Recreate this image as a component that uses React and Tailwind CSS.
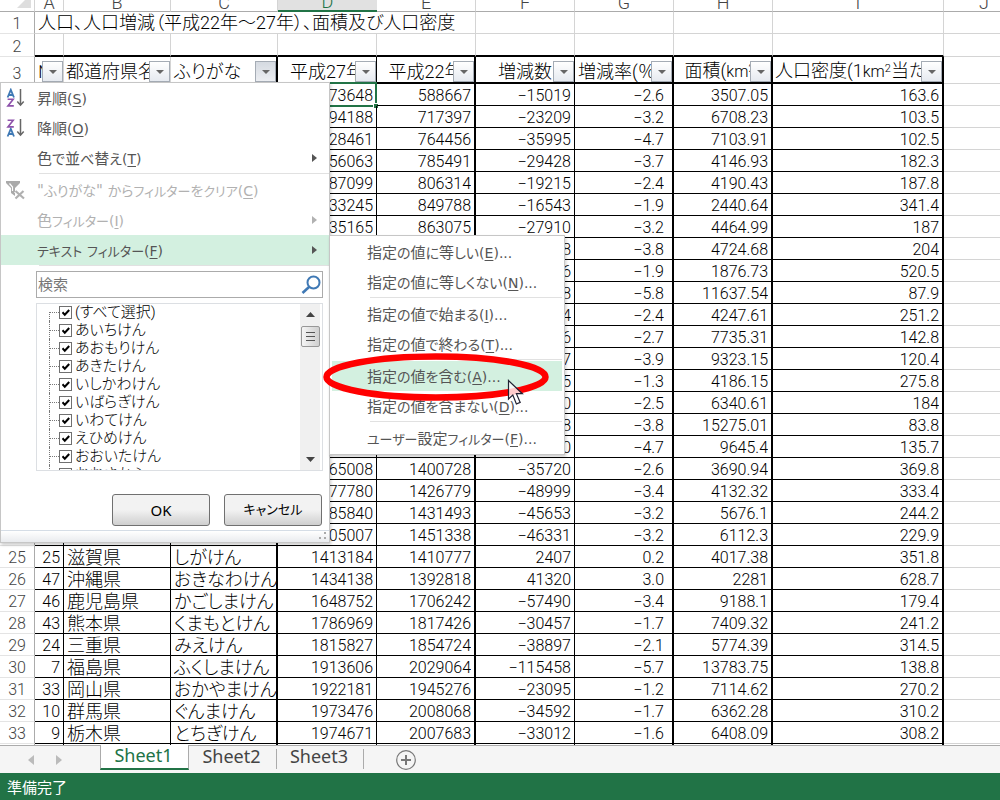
import React from "react";

const ROWS = [
  { n: 4, d: "573648", e: "588667", f: "−15019", g: "−2.6", h: "3507.05", i: "163.6" },
  { n: 5, d: "694188", e: "717397", f: "−23209", g: "−3.2", h: "6708.23", i: "103.5" },
  { n: 6, d: "728461", e: "764456", f: "−35995", g: "−4.7", h: "7103.91", i: "102.5" },
  { n: 7, d: "756063", e: "785491", f: "−29428", g: "−3.7", h: "4146.93", i: "182.3" },
  { n: 8, d: "787099", e: "806314", f: "−19215", g: "−2.4", h: "4190.43", i: "187.8" },
  { n: 9, d: "833245", e: "849788", f: "−16543", g: "−1.9", h: "2440.64", i: "341.4" },
  { n: 10, d: "835165", e: "863075", f: "−27910", g: "−3.2", h: "4464.99", i: "187" },
  { n: 11, f: "8", g: "−3.8", h: "4724.68", i: "204" },
  { n: 12, f: "6", g: "−1.9", h: "1876.73", i: "520.5" },
  { n: 13, f: "8", g: "−5.8", h: "11637.54", i: "87.9" },
  { n: 14, f: "4", g: "−2.4", h: "4247.61", i: "251.2" },
  { n: 15, f: "6", g: "−2.7", h: "7735.31", i: "142.8" },
  { n: 16, f: "7", g: "−3.9", h: "9323.15", i: "120.4" },
  { n: 17, f: "5", g: "−1.3", h: "4186.15", i: "275.8" },
  { n: 18, f: "0", g: "−2.5", h: "6340.61", i: "184" },
  { n: 19, f: "8", g: "−3.8", h: "15275.01", i: "83.8" },
  { n: 20, f: "0", g: "−4.7", h: "9645.4", i: "135.7" },
  { n: 21, d: "1365008", e: "1400728", f: "−35720", g: "−2.6", h: "3690.94", i: "369.8" },
  { n: 22, d: "1377780", e: "1426779", f: "−48999", g: "−3.4", h: "4132.32", i: "333.4" },
  { n: 23, d: "1385840", e: "1431493", f: "−45653", g: "−3.2", h: "5676.1", i: "244.2" },
  { n: 24, d: "1405007", e: "1451338", f: "−46331", g: "−3.2", h: "6112.3", i: "229.9" },
  { n: 25, a: "25", b: "滋賀県", c: "しがけん", d: "1413184", e: "1410777", f: "2407", g: "0.2", h: "4017.38", i: "351.8" },
  { n: 26, a: "47", b: "沖縄県", c: "おきなわけん", d: "1434138", e: "1392818", f: "41320", g: "3.0", h: "2281", i: "628.7" },
  { n: 27, a: "46", b: "鹿児島県", c: "かごしまけん", d: "1648752", e: "1706242", f: "−57490", g: "−3.4", h: "9188.1", i: "179.4" },
  { n: 28, a: "43", b: "熊本県", c: "くまもとけん", d: "1786969", e: "1817426", f: "−30457", g: "−1.7", h: "7409.32", i: "241.2" },
  { n: 29, a: "24", b: "三重県", c: "みえけん", d: "1815827", e: "1854724", f: "−38897", g: "−2.1", h: "5774.39", i: "314.5" },
  { n: 30, a: "7", b: "福島県", c: "ふくしまけん", d: "1913606", e: "2029064", f: "−115458", g: "−5.7", h: "13783.75", i: "138.8" },
  { n: 31, a: "33", b: "岡山県", c: "おかやまけん", d: "1922181", e: "1945276", f: "−23095", g: "−1.2", h: "7114.62", i: "270.2" },
  { n: 32, a: "10", b: "群馬県", c: "ぐんまけん", d: "1973476", e: "2008068", f: "−34592", g: "−1.7", h: "6362.28", i: "310.2" },
  { n: 33, a: "9", b: "栃木県", c: "とちぎけん", d: "1974671", e: "2007683", f: "−33012", g: "−1.6", h: "6408.09", i: "308.2" },
  { n: "" },
];

const COLUMNS = [
  { key: "a", edge: "border-r", align: "text-right pr-[3px]" },
  { key: "b", edge: "border-r", align: "text-left pl-[3px]" },
  { key: "c", edge: "border-r-2", align: "text-left pl-[3px]" },
  { key: "d", edge: "border-r", align: "text-right pr-[3px]" },
  { key: "e", edge: "border-r-2", align: "text-right pr-[3px]" },
  { key: "f", edge: "border-r", align: "text-right pr-[3px]" },
  { key: "g", edge: "border-r-2", align: "text-right pr-2" },
  { key: "h", edge: "border-r-2", align: "text-right pr-[3px]" },
  { key: "i", edge: "border-r-2", align: "text-right pr-[3px]" },
];

const FILTERS = [
  { label: "№", edge: "border-r border-r-[#d4d4d4]", place: "justify-start pl-[3px]" },
  { label: "都道府県名", edge: "border-r border-r-[#d4d4d4]", place: "justify-start pl-[2px]" },
  { label: "ふりがな", edge: "border-r-2 border-black", place: "justify-start pl-[3px]", active: true },
  { label: "平成27年", edge: "border-r border-black", place: "justify-center" },
  { label: "平成22年", edge: "border-r-2 border-black", place: "justify-center" },
  { label: "増減数", edge: "border-r border-black", place: "justify-center" },
  { label: "増減率(％)", edge: "border-r-2 border-black", place: "justify-start pl-[3px]" },
  { label: <>面積(<Unit />)</>, name: "面積", edge: "border-r-2 border-black", place: "justify-center" },
  { label: <>人口密度(1<Unit />当たり)</>, name: "人口密度", edge: "border-r-2 border-black", place: "justify-start pl-[2px]" },
];

const LETTERS = ["A", "B", "C", "D", "E", "F", "G", "H", "I", "J"];

const CHOICES = [
  "(すべて選択)", "あいちけん", "あおもりけん", "あきたけん", "いしかわけん",
  "いばらぎけん", "いわてけん", "えひめけん", "おおいたけん", "おおさかふ",
];

const SHEET_FONT = "font-['Roboto','Noto_Sans_CJK_JP',sans-serif] font-light";
const MENU_FONT = "font-['DejaVu_Sans','Noto_Sans_CJK_JP',sans-serif] [font-feature-settings:'palt']";

function Unit() {
  return <span className="text-base">km<sup className="text-[11px]">2</sup></span>;
}

function FilterButton({ name, active }) {
  return (
    <button
      type="button"
      aria-label={name + "のフィルター"}
      className={
        "absolute right-0 bottom-0 flex h-[21px] w-[21px] items-center justify-center border border-[#a5acb5] " +
        (active ? "bg-linear-to-b from-[#d5dae1] to-[#eceef2]" : "bg-linear-to-b from-white to-[#e6eaf0]")
      }
    >
      <svg width="8" height="4" viewBox="0 0 8 4" aria-hidden="true"><path d="M0 0h8L4 4z" fill="#666" /></svg>
    </button>
  );
}

function Sheet() {
  return (
    <table className={"-mt-[10px] w-full table-fixed border-separate border-spacing-0 leading-[18px] text-black " + SHEET_FONT}>
      <colgroup>
        <col className="w-[35px]" />
        <col className="w-[29px]" />
        <col className="w-[107px]" />
        <col className="w-[107px]" />
        <col className="w-[99px]" />
        <col className="w-[99px]" />
        <col className="w-[99px]" />
        <col className="w-[99px]" />
        <col className="w-[99px]" />
        <col className="w-[171px]" />
        <col />
      </colgroup>
      <thead>
        <tr className="h-[22px] text-lg leading-[16px] text-[#444]">
          <td className="border-r border-b border-r-[#d4d4d4] border-b-[#ababab] p-0 align-bottom">
            <svg className="mb-[3px] ml-[17px] block" width="14" height="14" viewBox="0 0 14 14" aria-hidden="true"><path d="M14 0v14H0z" fill="#dedede" /></svg>
          </td>
          {LETTERS.map((l) => (
            <th
              key={l}
              scope="col"
              className={
                "p-0 text-center align-bottom font-light " +
                (l === "D"
                  ? "border-b-2 border-[#217346] bg-[#e1e1e1] text-[#217346]"
                  : "border-b border-r-[#d4d4d4] border-b-[#ababab]") +
                (l === "J" ? " pl-6" : l === "D" ? "" : " border-r")
              }
            >
              {l}
            </th>
          ))}
        </tr>
      </thead>
      <tbody>
        <tr className="h-[22px]">
          <RowHead n={1} />
          <td colSpan={5} className="border-r border-b border-[#d4d4d4] p-0 pl-[3px] text-lg leading-[20px] whitespace-nowrap [font-feature-settings:'palt']">
            人口、人口増減（平成22年～27年）、面積及び人口密度
          </td>
          {LETTERS.slice(5).map((l) => <td key={l} className={"border-b border-[#d4d4d4] p-0 " + (l === "J" ? "" : "border-r")} />)}
        </tr>
        <tr className="h-[23px]">
          <RowHead n={2} />
          {LETTERS.map((l) => (
            <td key={l} className={"p-0 " + (l === "J" ? "border-b border-b-[#d4d4d4]" : "border-r border-b-2 border-r-[#d4d4d4] border-b-black")} />
          ))}
        </tr>
        <tr className="h-[27px]">
          <RowHead n={3} />
          {FILTERS.map((f, k) => (
            <th key={k} scope="col" className={"border-b-2 border-b-black p-0 font-light " + f.edge}>
              <div className={"relative flex h-[25px] items-center overflow-hidden pt-[5px] text-lg leading-[20px] whitespace-nowrap [font-feature-settings:'palt'] " + f.place}>
                <span>{f.label}</span>
                <FilterButton name={f.name || f.label} active={f.active} />
              </div>
            </th>
          ))}
          <td className="border-b border-[#d4d4d4] p-0" />
        </tr>
        {ROWS.map((r) => (
          <tr key={r.n} className="h-[22px]">
            <RowHead n={r.n} />
            {COLUMNS.map((c) => (
              <td key={c.key} className={"relative border-b border-black p-0 " + c.edge + " " + c.align}>
                <span className={"block h-[21px] overflow-hidden leading-[24px] whitespace-nowrap " + (c.key === "b" || c.key === "c" ? "text-lg leading-[24px] [font-feature-settings:'palt']" : "text-base leading-[24px]")}>
                  {r[c.key]}
                </span>
                {r.n === 4 && c.key === "d" && (
                  <span className="absolute -inset-x-[1px] -top-[2px] -bottom-[2px] border-2 border-[#217346]">
                    <span className="absolute -right-[3px] -bottom-[3px] h-[5px] w-[5px] border-t border-l border-white bg-[#217346]" />
                  </span>
                )}
              </td>
            ))}
            <td className="border-b border-[#d4d4d4] p-0" />
          </tr>
        ))}
      </tbody>
    </table>
  );
}

function RowHead({ n }) {
  return (
    <th scope="row" className="border-r border-b border-r-[#ababab] border-b-[#e4e4e4] p-0 text-center align-bottom text-base leading-[18px] font-light text-[#444]">
      {n}
    </th>
  );
}

function Label({ text }) {
  return text.split(/([ァ-ヶー]+|[ぁ-ん]+)/).map((part, k) => {
    if (/^[ァ-ヶー]/.test(part)) return <span key={k} className="text-[13px]">{part}</span>;
    if (/^[ぁ-ん]/.test(part)) return <span key={k} className="text-sm">{part}</span>;
    return part;
  });
}

function MenuItem({ text, hotkey, suffix, icon, arrow, disabled, highlighted, aside }) {
  return (
    <button
      type="button"
      disabled={disabled}
      className={
        "flex h-[30px] w-full items-center pr-3 text-left text-[15px] leading-[20px] whitespace-nowrap " +
        (disabled ? "text-[#b1b1b1] " : "text-[#555] ") +
        (highlighted ? "bg-[#d3f0e0]" : "")
      }
    >
      <span className={"flex shrink-0 items-center pl-1 " + (aside || "w-9")}>{icon}</span>
      <span className="grow pt-[2px]">
        <Label text={text} />
        <span className="text-sm">(<span className="underline underline-offset-2">{hotkey}</span>){suffix}</span>
      </span>
      {arrow && <svg width="5" height="8" viewBox="0 0 5 8" aria-hidden="true"><path d="M0 0l5 4-5 4z" fill="currentColor" /></svg>}
    </button>
  );
}

function Rule() {
  return <div className="ml-[38px] h-[2px] border-t border-[#e1e1e1]" />;
}

function SortIcon({ descending }) {
  const a = descending ? 9 : 0;
  const z = descending ? 0 : 9;
  return (
    <svg width="20" height="20" viewBox="0 0 20 20" fill="none" aria-hidden="true">
      <g transform={"translate(2 " + (a + 1) + ")"} stroke="#3f79b5" strokeWidth="1.8">
        <path d="M0.6 8.5L3.8 0.8 7 8.5M1.8 6H5.9" />
      </g>
      <g transform={"translate(2 " + (z + 1) + ")"} stroke="#8d52ab" strokeWidth="1.6">
        <path d="M0.6 1.2H6.2L0.9 7.9H6.8" />
      </g>
      <path d="M15.500 1v16M12.300 13.600l3.200 3.600 3.200-3.600" stroke="#666" strokeWidth="1.500" />
    </svg>
  );
}

function ClearIcon() {
  return (
    <svg width="22" height="20" viewBox="0 0 22 20" aria-hidden="true">
      <path d="M1 1h14v2l-5 5v8l-4-3V8L1 3z" fill="#aaa" />
      <path d="M4.500 3.500l3 3.500v4" stroke="#fff" strokeWidth="1.200" fill="none" />
      <path d="M10.500 11l8 7.500M18.500 11l-8 7.500" stroke="#fff" strokeWidth="4" />
      <path d="M10.500 11l8.500 7.500M18.500 11l-8 7.500" stroke="#b0b0b0" strokeWidth="2.200" />
    </svg>
  );
}

function Choice({ label, first }) {
  return (
    <li className="flex h-[18px] items-center">
      <span className="flex w-[22px] shrink-0 self-stretch pl-3">
        <span className={"w-0 border-l border-dotted border-[#777] " + (first ? "mt-[9px]" : "")} />
        <span className="mt-[9px] h-0 grow border-t border-dotted border-[#777]" />
      </span>
      <label className="flex items-center text-[15px] leading-[16px] whitespace-nowrap text-black">
        <span className="relative mr-[3px] flex">
          <input type="checkbox" defaultChecked className="h-[13px] w-[13px] appearance-none border border-[#707070] bg-white" />
          <svg className="pointer-events-none absolute top-[3px] left-[3px]" width="8" height="8" viewBox="0 0 8 8" fill="none" aria-hidden="true">
            <path d="M0.5 3.200L2.800 5.800 7.200 1" stroke="#000" strokeWidth="2" />
          </svg>
        </span>
        {label}
      </label>
    </li>
  );
}

function FilterMenu() {
  return (
    <div className={"absolute top-[82px] left-0 flex h-[461px] w-[330px] flex-col border border-[#c6c6c6] bg-white shadow-[1px_2px_3px_rgba(0,0,0,0.2)] " + MENU_FONT}>
      <MenuItem hotkey="S" icon={<SortIcon />} text="昇順" />
      <MenuItem hotkey="O" icon={<SortIcon descending />} text="降順" />
      <MenuItem hotkey="T" arrow text="色で並べ替え" />
      <Rule />
      <MenuItem hotkey="C" disabled icon={<ClearIcon />} text={'"ふりがな" からフィルターをクリア'} />
      <MenuItem hotkey="I" arrow disabled text="色フィルター" />
      <MenuItem hotkey="F" arrow highlighted text="テキスト フィルター" />
      <Rule />
      <div className="mt-1 mr-[6px] ml-[35px] flex h-[27px] items-center border border-[#ababab] pr-px pl-px">
        <input type="text" aria-label="検索" placeholder="検索" className="min-w-0 grow text-[15px] leading-[20px] outline-none placeholder:text-[#777]" />
        <svg width="20" height="20" viewBox="0 0 20 20" fill="none" stroke="#3f79b5" aria-hidden="true">
          <circle cx="12.500" cy="7.500" r="6" strokeWidth="2" />
          <path d="M8 12L1.500 18" strokeWidth="2.600" />
        </svg>
      </div>
      <div className={"mt-[5px] mr-[6px] ml-[35px] flex h-[168px] overflow-hidden border border-[#dcdfe3] " + SHEET_FONT + " [font-feature-settings:'palt']"}>
        <ul className="-mt-px grow">
          {CHOICES.map((c, k) => <Choice key={c} label={c} first={k === 0} />)}
        </ul>
        <div className="mr-[2px] flex w-5 flex-col items-center bg-[#f0f0f0] pt-2 pb-2">
          <svg width="9" height="5" viewBox="0 0 9 5" aria-hidden="true"><path d="M0 5h9L4.500 0z" fill="#444" /></svg>
          <span className="mt-[9px] flex h-[21px] w-[19px] flex-col items-center justify-center gap-[3px] rounded-[2px] border border-[#979797] bg-linear-to-r from-[#f5f5f5] to-[#cfcfcf]">
            <span className="h-px w-[9px] bg-[#555]" />
            <span className="h-px w-[9px] bg-[#555]" />
            <span className="h-px w-[9px] bg-[#555]" />
          </span>
          <svg className="mt-auto" width="9" height="5" viewBox="0 0 9 5" aria-hidden="true"><path d="M0 0h9L4.500 5z" fill="#444" /></svg>
        </div>
      </div>
      <div className="mt-[23px] mr-[7px] flex justify-end gap-[14px] text-black">
        <button type="button" className="h-8 w-[98px] rounded-[3px] border border-[#707070] bg-linear-to-b from-[#f2f2f2] from-50% to-[#cfcfcf] to-100% font-['Noto_Sans',sans-serif] text-[15px] leading-[20px]">OK</button>
        <button type="button" className="h-8 w-[98px] rounded-[3px] border border-[#707070] bg-linear-to-b from-[#f2f2f2] from-50% to-[#cfcfcf] to-100% text-[13px] leading-[20px]">キャンセル</button>
      </div>
      <div className="mt-auto flex h-3 items-end justify-end border-t border-[#d5dde6] bg-linear-to-b from-white to-[#e9ebee] p-[2px]">
        <svg width="8" height="8" viewBox="0 0 8 8" fill="#aaa" aria-hidden="true"><path d="M5 0h2v2H5zM5 5h2v2H5zM0 5h2v2H0z" /></svg>
      </div>
    </div>
  );
}

function SubMenu() {
  const aside = "w-[35px]";
  return (
    <div className={"absolute top-[235px] left-[329px] w-[236px] border border-[#c6c6c6] bg-white px-[2px] py-px shadow-[1px_2px_3px_rgba(0,0,0,0.2)] " + MENU_FONT}>
      <MenuItem hotkey="E" suffix="..." aside={aside} text="指定の値に等しい" />
      <MenuItem hotkey="N" suffix="..." aside={aside} text="指定の値に等しくない" />
      <Rule />
      <MenuItem hotkey="I" suffix="..." aside={aside} text="指定の値で始まる" />
      <MenuItem hotkey="T" suffix="..." aside={aside} text="指定の値で終わる" />
      <Rule />
      <MenuItem hotkey="A" suffix="..." aside={aside} highlighted text="指定の値を含む" />
      <MenuItem hotkey="D" suffix="..." aside={aside} text="指定の値を含まない" />
      <Rule />
      <MenuItem hotkey="F" suffix="..." aside={aside} text="ユーザー設定フィルター" />
    </div>
  );
}

function SheetTabs() {
  return (
    <nav className="flex h-7 shrink-0 items-start border-t border-[#ababab] bg-[#f5f5f5] font-['Noto_Sans',sans-serif] text-lg leading-[20px] text-[#444]">
      <div className="flex w-[100px] items-center gap-[22px] self-stretch pl-7">
        <button type="button" aria-label="前のシート"><svg width="6" height="10" viewBox="0 0 6 10"><path d="M6 0v10L0 5z" fill="#bbb" /></svg></button>
        <button type="button" aria-label="次のシート"><svg width="6" height="10" viewBox="0 0 6 10"><path d="M0 0v10l6-5z" fill="#bbb" /></svg></button>
      </div>
      <button type="button" className="-mt-px h-[25px] w-[89px] border-x border-b-2 border-x-[#ababab] border-b-[#217346] bg-white pr-[2px] pb-[3px] text-[#217346]">Sheet1</button>
      <button type="button" className="h-[20px] w-[87px] pr-[2px]">Sheet2</button>
      <span className="mt-[3px] h-5 w-px bg-[#ababab]" />
      <button type="button" className="h-[20px] w-[86px] pr-[2px]">Sheet3</button>
      <span className="mt-[3px] h-5 w-px bg-[#ababab]" />
      <button type="button" aria-label="新しいシート" className="mt-1 ml-8">
        <svg width="20" height="20" viewBox="0 0 20 20" fill="none" stroke="#777" aria-hidden="true">
          <circle cx="10" cy="10" r="9.300" strokeWidth="1.200" />
          <path d="M10 5v10M5 10h10" strokeWidth="2" />
        </svg>
      </button>
    </nav>
  );
}

export default function App() {
  return (
    <div className="relative flex h-screen flex-col overflow-hidden bg-white">
      <main className="min-h-0 grow overflow-hidden"><Sheet /></main>
      <SheetTabs />
      <footer className="flex h-[27px] shrink-0 items-center bg-[#217346] pl-[7px] font-['Noto_Sans_CJK_JP',sans-serif] text-[15px] leading-[20px] text-white">準備完了</footer>
      <FilterMenu />
      <SubMenu />
      <svg className="pointer-events-none absolute top-[352px] left-[322px]" width="228" height="56" viewBox="0 0 228 56" fill="none" aria-hidden="true">
        <ellipse cx="114" cy="25" rx="109.500" ry="20.500" stroke="#f00" strokeWidth="6.500" />
        <path d="M186.500 28.500v18.500l4.300-4 3.600 9 3.800-1.600-3.800-8.700h6z" fill="#fff" fillOpacity="0.8" stroke="#223" strokeWidth="1.200" />
      </svg>
    </div>
  );
}
